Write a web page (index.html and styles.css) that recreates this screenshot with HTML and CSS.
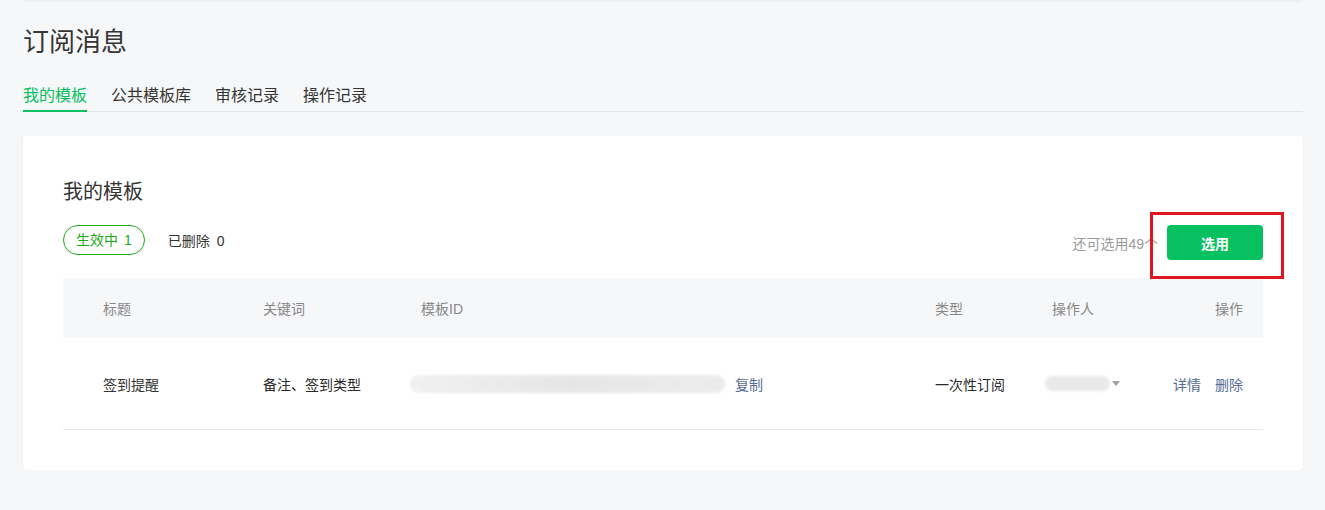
FILE: index.html
```html
<!DOCTYPE html>
<html lang="zh-CN">
<head>
<meta charset="utf-8">
<title>订阅消息</title>
<link rel="stylesheet" href="styles.css">
</head>
<body>
<div class="page">
  <div class="top-edge"></div>
  <h1 class="page-title">订阅消息</h1>
  <nav class="tabs">
    <a class="tab active">我的模板</a>
    <a class="tab">公共模板库</a>
    <a class="tab">审核记录</a>
    <a class="tab">操作记录</a>
  </nav>
  <section class="card">
    <h2 class="card-title">我的模板</h2>
    <div class="toolbar">
      <div class="filters">
        <span class="pill">生效中<span class="num">1</span></span>
        <span class="filter">已删除<span class="num">0</span></span>
      </div>
      <div class="actions">
        <span class="remain">还可选用49个</span>
        <span class="btn-wrap">
          <button class="btn">选用</button>
          <span class="highlight"></span>
        </span>
      </div>
    </div>
    <div class="table">
      <div class="thead">
        <div class="cell">标题</div>
        <div class="cell">关键词</div>
        <div class="cell">模板ID</div>
        <div class="cell">类型</div>
        <div class="cell">操作人</div>
        <div class="cell right">操作</div>
      </div>
      <div class="trow">
        <div class="cell muted">签到提醒</div>
        <div class="cell dark">备注、签到类型</div>
        <div class="cell idcell"><span class="blur-id"></span><a class="link copy">复制</a></div>
        <div class="cell dark">一次性订阅</div>
        <div class="cell opcell"><span class="blur-name"></span><span class="caret"></span></div>
        <div class="cell right ops"><a class="link">详情</a><a class="link">删除</a></div>
      </div>
    </div>
  </section>
</div>
</body>
</html>
```
FILE: styles.css
```css
* { box-sizing: border-box; }
html, body {
  margin: 0;
  padding: 0;
  background: #f6f7f9;
  font-family: "Liberation Sans", "Noto Sans CJK SC", sans-serif;
  color: #353535;
}
.page {
  padding: 0 22px 0 23px;
}
.top-edge {
  height: 2px;
  margin: 0 1px;
  background: #eeeff1;
}
.page-title {
  margin: 22px 0 0;
  font-size: 26px;
  line-height: 36px;
  font-weight: normal;
  color: #353535;
}
.tabs {
  margin-top: 24px;
  display: flex;
  gap: 24px;
  border-bottom: 1px solid #e2e3e5;
}
.tab {
  font-size: 16px;
  line-height: 24px;
  padding-bottom: 2px;
  margin-bottom: -1px;
  border-bottom: 2px solid transparent;
  color: #353535;
}
.tab.active {
  color: #07c160;
  border-bottom-color: #07c160;
}
.card {
  margin-top: 24px;
  background: #fff;
  border-radius: 4px;
  box-shadow: 0 1px 2px rgba(0,0,0,0.08);
  padding: 40px 40px 40px;
}
.card-title {
  margin: 0;
  font-size: 20px;
  line-height: 32px;
  font-weight: normal;
  color: #353535;
}
.toolbar {
  margin-top: 17px;
  display: flex;
  align-items: flex-start;
  justify-content: space-between;
}
.filters {
  display: flex;
  align-items: center;
  height: 30px;
  gap: 23px;
  font-size: 14px;
}
.pill {
  height: 30px;
  line-height: 28px;
  padding: 0 12px;
  border: 1px solid #1aad19;
  border-radius: 15px;
  color: #1aad19;
}
.pill .num { margin-left: 6px; }
.filter .num { margin-left: 7px; }
.filter { color: #353535; }
.actions {
  display: flex;
  align-items: center;
  gap: 9px;
}
.remain {
  font-size: 14px;
  color: #9a9a9a;
}
.btn-wrap {
  position: relative;
  display: block;
}
.btn {
  display: block;
  width: 96px;
  height: 35px;
  border: 0;
  border-radius: 4px;
  background: #07c160;
  color: #fff;
  font-family: inherit;
  font-size: 14px;
  font-weight: bold;
}
.highlight {
  position: absolute;
  left: -17px;
  right: -21px;
  top: -13px;
  bottom: -19px;
  border: 3px solid #e0161f;
}
.table { margin-top: 18px; }
.thead, .trow {
  display: grid;
  grid-template-columns: 160px 158px 514px 117px 1fr auto;
  align-items: center;
  padding: 0 20px 0 40px;
  font-size: 14px;
}
.thead {
  height: 60px;
  background: #f6f7f9;
  color: #888;
}
.trow {
  height: 92px;
  border-bottom: 1px solid #e7e7e7;
}
.cell.right { text-align: right; }
.muted { color: #353535; }
.dark { color: #2a2a2a; }
.idcell, .opcell {
  display: flex;
  align-items: center;
}
.blur-id {
  display: block;
  width: 315px;
  height: 18px;
  margin-left: -11px;
  border-radius: 9px;
  background: linear-gradient(90deg, #f0f0f0, #e6e6e6 50%, #ececec);
  filter: blur(1.5px);
}
.copy { margin-left: 10px; }
.link {
  color: #576b95;
  cursor: pointer;
}
.blur-name {
  display: block;
  width: 65px;
  height: 15px;
  margin-left: -7px;
  border-radius: 8px;
  background: #e9e9e9;
  filter: blur(1.5px);
}
.caret {
  width: 0;
  height: 0;
  margin-left: 2px;
  border-left: 4px solid transparent;
  border-right: 4px solid transparent;
  border-top: 5px solid #a0a0a0;
}
.ops {
  display: flex;
  gap: 14px;
}
```
